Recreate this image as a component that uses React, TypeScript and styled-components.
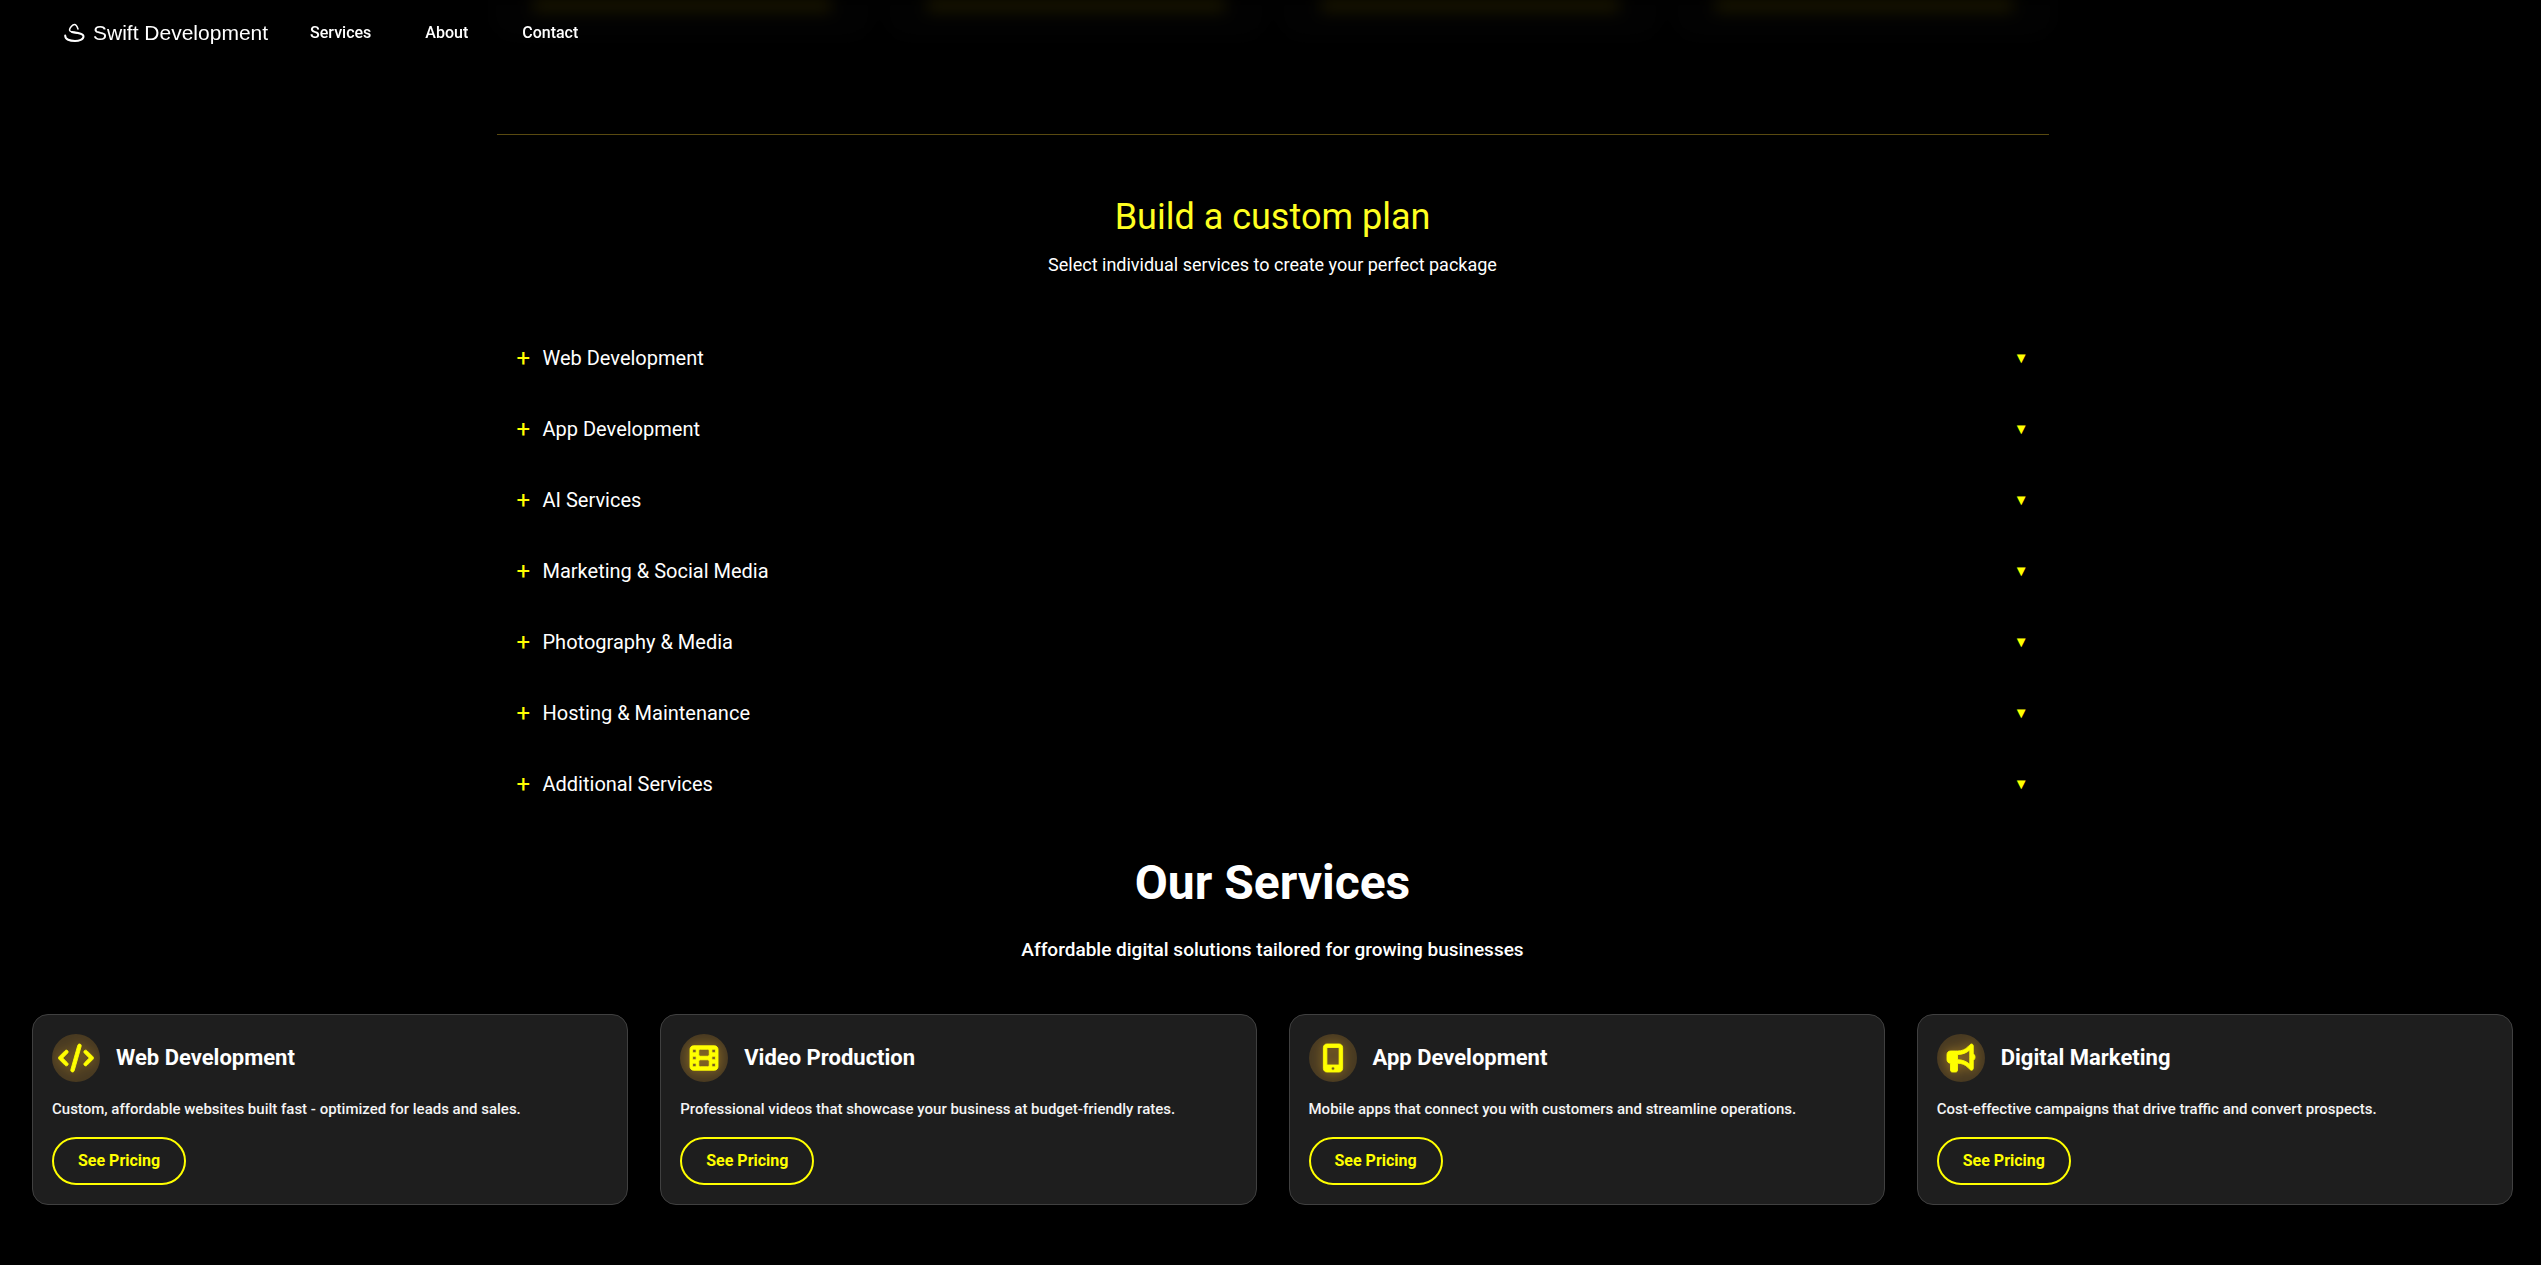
import React from 'react';
import styled, { createGlobalStyle } from 'styled-components';
import { FaBullhorn, FaCode, FaFilm, FaMobileScreenButton } from 'react-icons/fa6';
import type { IconType } from 'react-icons';

const GlobalStyle = createGlobalStyle`
  *, *::before, *::after { box-sizing: border-box; }
  body {
    margin: 0;
    background: #000;
    color: #fff;
    font-family: Roboto, "Liberation Sans", sans-serif;
  }
  h2, h3, p, ul { margin: 0; padding: 0; }
  ul { list-style: none; }
`;

const Page = styled.div`
  min-height: 100vh;
  padding-left: 4px;
  background: #000;
  overflow: hidden;
`;

const Header = styled.header`
  position: fixed;
  inset: 0 0 auto 0;
  z-index: 2;
  display: flex;
  align-items: center;
  gap: 42px;
  height: 66px;
  padding: 0 64px;
`;

const Brand = styled.a`
  display: flex;
  align-items: center;
  gap: 8px;
  color: #fff;
  font: 400 21px/24px "Liberation Sans", Arial, sans-serif;
  text-decoration: none;
`;

const NavLinks = styled.nav`
  display: flex;
  gap: 54px;
`;

const NavLink = styled.a`
  color: #fff;
  font-size: 16px;
  font-weight: 500;
  line-height: 24px;
  text-decoration: none;
`;

const Container = styled.div`
  max-width: 1552px;
  margin: 0 auto;
`;

const PlanTails = styled.div`
  display: grid;
  grid-template-columns: repeat(4, 1fr);
  gap: 24px;
  height: 34px;
  filter: blur(8px);
`;

const PlanTail = styled.div`
  padding: 0 34px;
  border: 2px solid #080808;
  border-top: 0;
  border-radius: 0 0 16px 16px;
  background: #020202;
`;

const PlanTailButton = styled.div`
  height: 10px;
  background: #221d00;
`;

const Divider = styled.hr`
  height: 1px;
  margin: 100px 0 60px;
  border: 0;
  background: #594a10;
`;

const PlanTitle = styled.h2`
  color: #ffff20;
  font-size: 36px;
  font-weight: 400;
  line-height: 44px;
  text-align: center;
`;

const PlanText = styled.p`
  margin: 12px 0 43px;
  font-size: 18px;
  line-height: 28px;
  text-align: center;
`;

const PlanRow = styled.button`
  display: flex;
  align-items: center;
  width: 100%;
  height: 71px;
  padding: 0 20px;
  border: 0;
  background: transparent;
  color: #fff;
  font: 400 20px/28px Roboto, "Liberation Sans", sans-serif;
  text-align: left;
  cursor: pointer;
`;

const Plus = styled.span`
  width: 26px;
  color: #ff0;
  font-size: 24px;
`;

const Arrow = styled.span`
  margin-left: auto;
  color: #ff0;
  font-size: 15px;
  line-height: 24px;
`;

const Services = styled.section`
  padding: 34px 28px 60px;
`;

const ServicesTitle = styled.h2`
  font-size: 48px;
  font-weight: 700;
  line-height: 60px;
  text-align: center;
`;

const ServicesText = styled.p`
  margin: 23px 0 50px;
  font-size: 19px;
  font-weight: 500;
  line-height: 28px;
  text-align: center;
`;

const CardGrid = styled.div`
  display: grid;
  grid-template-columns: repeat(4, 1fr);
  gap: 32px;
`;

const Card = styled.article`
  padding: 19px;
  border: 1px solid #404040;
  border-radius: 16px;
  background: #1e1e1e;
`;

const CardHead = styled.div`
  display: flex;
  align-items: center;
  gap: 16px;
`;

const IconDisc = styled.div`
  display: flex;
  align-items: center;
  justify-content: center;
  width: 48px;
  height: 48px;
  border-radius: 50%;
  background: #483a22;
  color: #ff0;
  overflow: hidden;

  svg {
    flex: none;
    width: 36px;
    height: 28px;
    overflow: visible;
    stroke: currentColor;
    stroke-width: 16px;
    filter: drop-shadow(0 0 6px rgba(255, 190, 40, 0.5));
  }
`;

const CardTitle = styled.h3`
  font-size: 22px;
  font-weight: 700;
  line-height: 28px;
`;

const CardText = styled.p`
  margin: 16px 0;
  color: #f4f4f4;
  font-size: 15px;
  font-weight: 500;
  line-height: 23px;
`;

const PricingButton = styled.button`
  height: 48px;
  padding: 0 24px;
  border: 2px solid #ff0;
  border-radius: 24px;
  background: transparent;
  color: #ff0;
  font: 700 16px/24px Roboto, "Liberation Sans", sans-serif;
  cursor: pointer;
`;

const planGroups = [
  'Web Development',
  'App Development',
  'AI Services',
  'Marketing & Social Media',
  'Photography & Media',
  'Hosting & Maintenance',
  'Additional Services',
];

const services: { title: string; text: string; icon: IconType }[] = [
  { title: 'Web Development', text: 'Custom, affordable websites built fast - optimized for leads and sales.', icon: FaCode },
  { title: 'Video Production', text: 'Professional videos that showcase your business at budget-friendly rates.', icon: FaFilm },
  { title: 'App Development', text: 'Mobile apps that connect you with customers and streamline operations.', icon: FaMobileScreenButton },
  { title: 'Digital Marketing', text: 'Cost-effective campaigns that drive traffic and convert prospects.', icon: FaBullhorn },
];

function SwiftLogo() {
  return (
    <svg width="21" height="20" viewBox="0 0 21 20" fill="none" stroke="#fff" strokeLinecap="round" aria-hidden="true">
      <path d="M14 6 C13 3 12 1.500 10.500 1.500 C8.500 1.500 5.500 5 5.500 7 C5.500 9 9 9.500 13 10" strokeWidth="1.500" />
      <path d="M8 9 C14 10 19.500 10.500 19.500 13.500 C19.500 16.500 15 18 11 18 C6 18 1 16.500 1.200 12.500" strokeWidth="2" />
    </svg>
  );
}

export default function App() {
  return (
    <Page>
      <GlobalStyle />
      <Header>
        <Brand href="#home">
          <SwiftLogo />
          Swift Development
        </Brand>
        <NavLinks>
          <NavLink href="#services">Services</NavLink>
          <NavLink href="#about">About</NavLink>
          <NavLink href="#contact">Contact</NavLink>
        </NavLinks>
      </Header>
      <Container>
        <PlanTails>
          {[0, 1, 2, 3].map((tail) => (
            <PlanTail key={tail}>
              <PlanTailButton />
            </PlanTail>
          ))}
        </PlanTails>
        <Divider />
        <PlanTitle>Build a custom plan</PlanTitle>
        <PlanText>Select individual services to create your perfect package</PlanText>
        <ul>
          {planGroups.map((group) => (
            <li key={group}>
              <PlanRow type="button" aria-expanded="false">
                <Plus>+</Plus>
                {group}
                <Arrow>▼</Arrow>
              </PlanRow>
            </li>
          ))}
        </ul>
      </Container>
      <Services id="services">
        <ServicesTitle>Our Services</ServicesTitle>
        <ServicesText>Affordable digital solutions tailored for growing businesses</ServicesText>
        <CardGrid>
          {services.map(({ title, text, icon: Icon }) => (
            <Card key={title}>
              <CardHead>
                <IconDisc>
                  <Icon aria-hidden="true" />
                </IconDisc>
                <CardTitle>{title}</CardTitle>
              </CardHead>
              <CardText>{text}</CardText>
              <PricingButton type="button">See Pricing</PricingButton>
            </Card>
          ))}
        </CardGrid>
      </Services>
    </Page>
  );
}
